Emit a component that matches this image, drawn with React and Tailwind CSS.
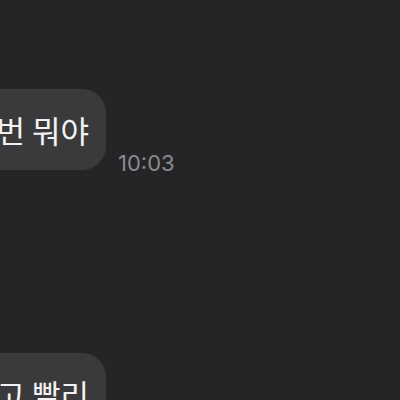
export default function App() {
  return (
    <div className="w-[400px] h-[400px] overflow-hidden bg-[#252527] flex flex-col pt-[89px] gap-[183px]">
      {/* 받은 메시지 */}
      <div className="flex items-end gap-[12px]">
        <div className="h-[81px] w-[106px] flex items-center justify-end rounded-r-[24px] bg-[#3a3a3c] pr-[17px] text-[31px] leading-none text-[#f2f2f2] whitespace-nowrap [font-family:'Noto_Sans_CJK_KR',sans-serif]">
          번 뭐야
        </div>
        <span className="mb-[-4px] text-[22px] leading-[22px] text-[#8a8a8e] [font-family:Inter,'Liberation_Sans',sans-serif]">
          10:03
        </span>
      </div>

      <div className="flex items-start">
        <div className="h-[81px] w-[106px] flex items-center justify-end rounded-tr-[24px] bg-[#3a3a3c] pr-[17px] text-[31px] leading-none text-[#f2f2f2] whitespace-nowrap [font-family:'Noto_Sans_CJK_KR',sans-serif]">
          고 빨리
        </div>
      </div>
    </div>
  );
}
